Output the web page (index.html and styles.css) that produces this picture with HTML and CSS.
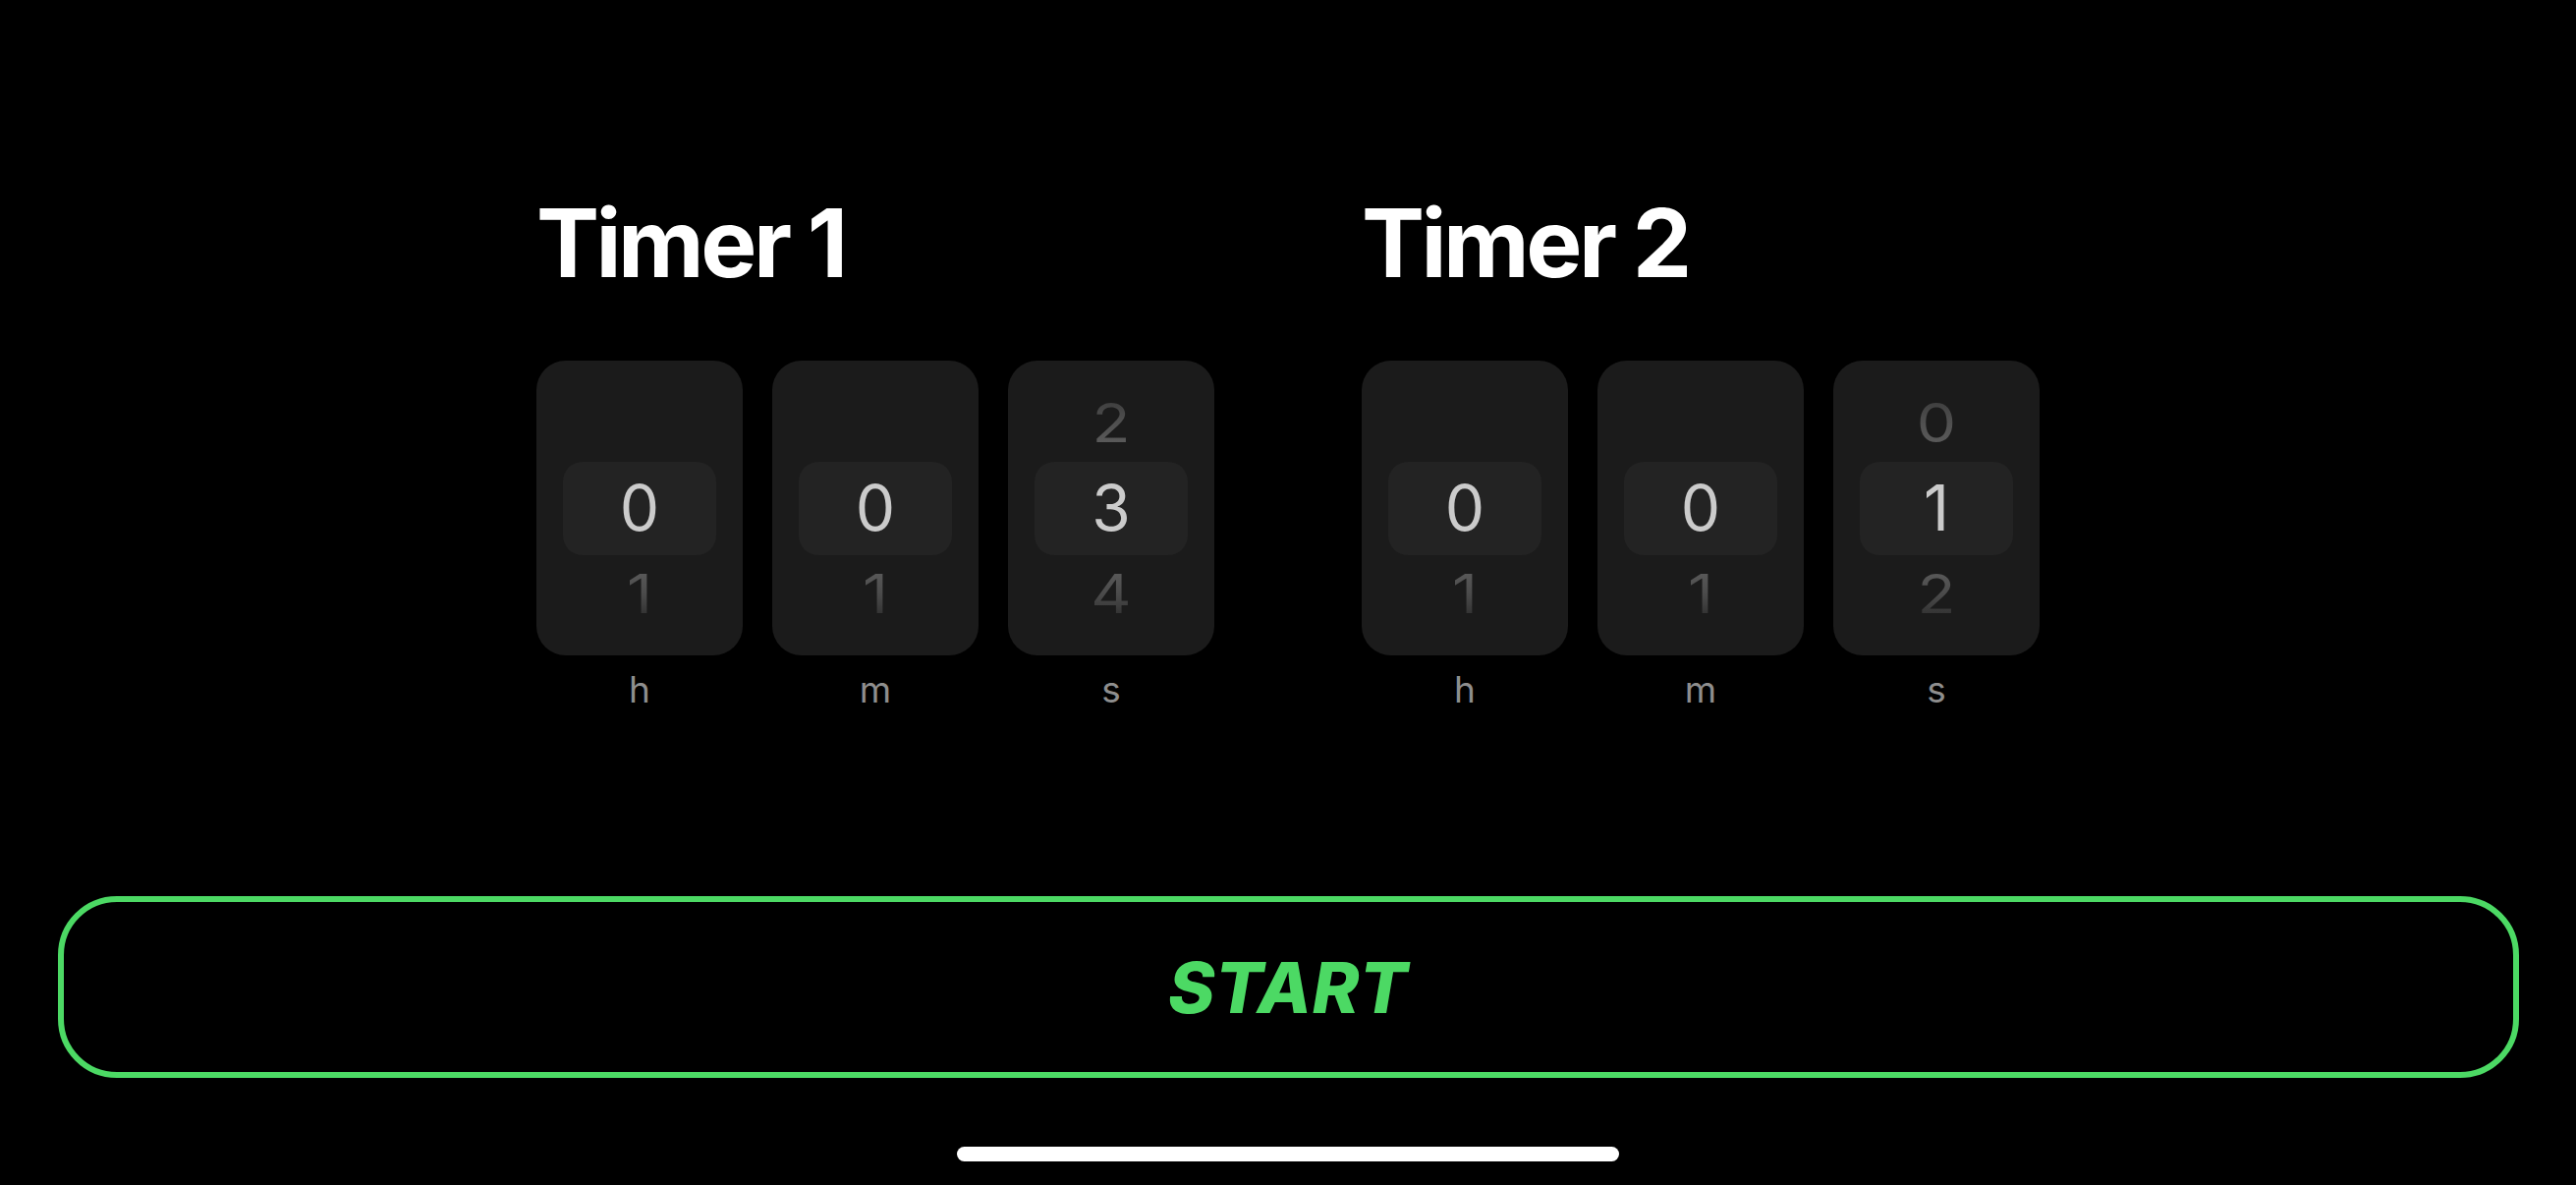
FILE: index.html
```html
<!DOCTYPE html>
<html lang="en">
<head>
<meta charset="utf-8">
<title>Timers</title>
<link rel="stylesheet" href="styles.css">
</head>
<body>
<main class="screen">
  <section class="timers">
    <div class="timer">
      <h1 class="timer-title">Timer 1</h1>
      <div class="wheels">
        <div class="wheel-col">
          <div class="wheel">
            <div class="row row-top"></div>
            <div class="row row-sel"><span class="digit">0</span></div>
            <div class="row row-bottom"><span class="digit side fade-down">1</span></div>
          </div>
          <div class="unit">h</div>
        </div>
        <div class="wheel-col">
          <div class="wheel">
            <div class="row row-top"></div>
            <div class="row row-sel"><span class="digit">0</span></div>
            <div class="row row-bottom"><span class="digit side fade-down">1</span></div>
          </div>
          <div class="unit">m</div>
        </div>
        <div class="wheel-col">
          <div class="wheel">
            <div class="row row-top"><span class="digit side fade-up">2</span></div>
            <div class="row row-sel"><span class="digit">3</span></div>
            <div class="row row-bottom"><span class="digit side fade-down">4</span></div>
          </div>
          <div class="unit">s</div>
        </div>
      </div>
    </div>
    <div class="timer">
      <h1 class="timer-title">Timer 2</h1>
      <div class="wheels">
        <div class="wheel-col">
          <div class="wheel">
            <div class="row row-top"></div>
            <div class="row row-sel"><span class="digit">0</span></div>
            <div class="row row-bottom"><span class="digit side fade-down">1</span></div>
          </div>
          <div class="unit">h</div>
        </div>
        <div class="wheel-col">
          <div class="wheel">
            <div class="row row-top"></div>
            <div class="row row-sel"><span class="digit">0</span></div>
            <div class="row row-bottom"><span class="digit side fade-down">1</span></div>
          </div>
          <div class="unit">m</div>
        </div>
        <div class="wheel-col">
          <div class="wheel">
            <div class="row row-top"><span class="digit side fade-up">0</span></div>
            <div class="row row-sel"><span class="digit">1</span></div>
            <div class="row row-bottom"><span class="digit side fade-down">2</span></div>
          </div>
          <div class="unit">s</div>
        </div>
      </div>
    </div>
  </section>
  <button class="start-btn" type="button">START</button>
  <div class="home-indicator"></div>
</main>
</body>
</html>
```

FILE: styles.css
```css
html, body {
  margin: 0;
  padding: 0;
  background: #000;
}

body {
  width: 2622px;
  height: 1206px;
  overflow: hidden;
  font-family: Inter, "Noto Sans", "Liberation Sans", sans-serif;
  color: #fff;
}

.screen {
  display: flex;
  flex-direction: column;
  align-items: center;
  padding-top: 187px;
  height: 1206px;
  box-sizing: border-box;
}

.timers {
  display: flex;
  gap: 150px;
}

.timer {
  display: flex;
  flex-direction: column;
}

.timer-title {
  margin: 0;
  font-size: 96px;
  line-height: 120px;
  font-weight: 700;
  letter-spacing: -3.5px;
  color: #fff;
}

.wheels {
  display: flex;
  gap: 30px;
  margin-top: 60px;
}

.wheel-col {
  display: flex;
  flex-direction: column;
  align-items: center;
  gap: 13px;
}

.wheel {
  width: 210px;
  height: 300px;
  border-radius: 30px;
  background: #1b1b1b;
  display: flex;
  flex-direction: column;
  align-items: center;
  justify-content: center;
}

.row {
  display: flex;
  align-items: center;
  justify-content: center;
  width: 156px;
  height: 79px;
}

.row-sel {
  height: 95px;
  border-radius: 20px;
  background: #232323;
}

.digit {
  font-size: 64px;
  line-height: 1;
  font-weight: 400;
  color: #cbcbcb;
}

.side {
  display: inline-block;
  transform: scaleY(0.85);
  -webkit-background-clip: text;
  background-clip: text;
  color: transparent;
}

.fade-down {
  background-image: linear-gradient(to bottom, #5c5c5c 0%, #494949 55%, #2c2c2c 100%);
}

.fade-up {
  background-image: linear-gradient(to top, #5c5c5c 0%, #4e4e4e 55%, #3a3a3a 100%);
}

.unit {
  font-size: 37px;
  line-height: 44px;
  color: #8e8e8e;
}

.start-btn {
  margin-top: 188px;
  width: 2505px;
  height: 185px;
  box-sizing: border-box;
  border: 6px solid #4cd964;
  border-radius: 60px;
  background: #000;
  color: #4cd964;
  font-family: Inter, "Noto Sans", "Liberation Sans", sans-serif;
  font-size: 72px;
  font-weight: 800;
  font-style: italic;
  letter-spacing: 0.5px;
  padding: 0;
  cursor: pointer;
}

.home-indicator {
  margin-top: 70px;
  width: 674px;
  height: 15px;
  border-radius: 8px;
  background: #fff;
}
```
